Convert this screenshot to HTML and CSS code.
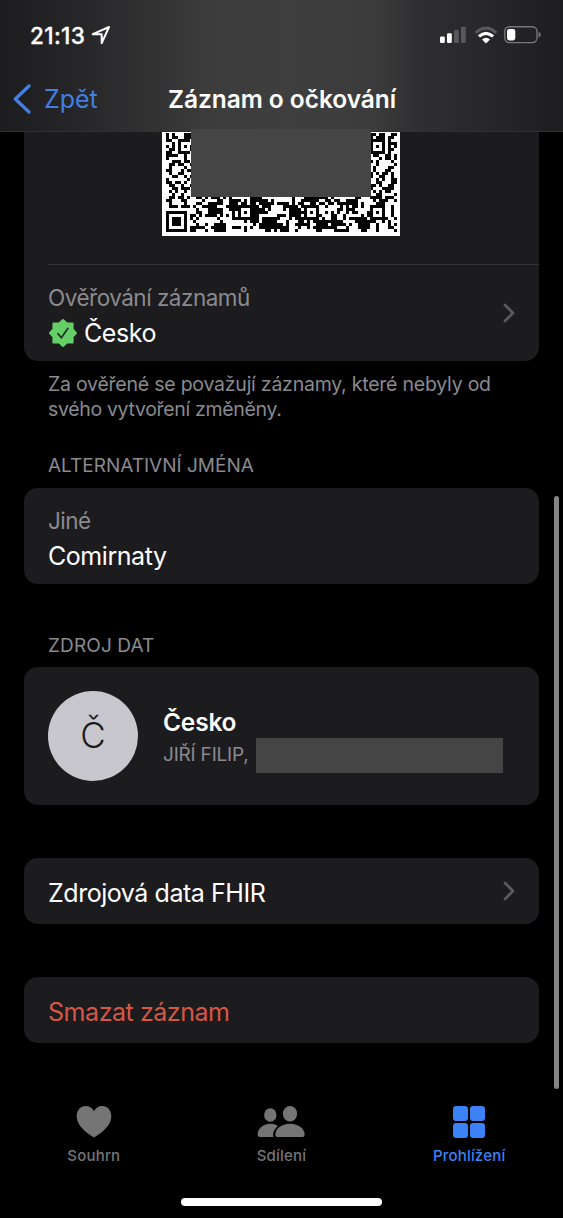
FILE: index.html
```html
<!DOCTYPE html>
<html lang="cs">
<head>
<meta charset="utf-8">
<title>Záznam o očkování</title>
<link rel="stylesheet" href="styles.css">
</head>
<body>
<div class="phone">
  <header class="header">
    <div class="status">
      <div class="clock"><span class="time">21:13</span>
        <svg class="location" width="20" height="20" viewBox="0 0 20 20"><path d="M1.8 9.2 18 2 10.7 18.2V9.3Z" fill="none" stroke="#fff" stroke-width="2" stroke-linejoin="round"/></svg>
      </div>
      <div class="indicators">
        <svg width="26" height="18" viewBox="0 0 26 18"><g fill="#fff"><rect y="10.5" width="4.8" height="6.5" rx="1.3"/><rect x="7" y="7.3" width="4.8" height="9.7" rx="1.3"/></g><g fill="#58585a"><rect x="14" y="4" width="4.8" height="13" rx="1.3"/><rect x="21" y=".7" width="4.8" height="16.3" rx="1.3"/></g></svg>
        <svg class="wifi" width="24" height="18" viewBox="0 0 24 18"><g fill="none" stroke-width="3.1"><path d="M1.6 6.8Q12-2.6 22.4 6.8" stroke="#58585a"/><path d="M4.9 10.4Q12 4.2 19.1 10.4" stroke="#fff"/></g><path d="M8 13.4Q12 10.2 16 13.4L12 17.4Z" fill="#fff"/></svg>
        <svg class="battery" width="38" height="18" viewBox="0 0 38 18"><rect x=".8" y=".8" width="32.2" height="15.8" rx="4.5" fill="none" stroke="#77777a" stroke-width="1.4"/><rect x="3" y="3" width="8.3" height="11.4" rx="2.3" fill="#fff"/><path d="M34.6 5.7q2.2.8 2.2 3t-2.2 3z" fill="#77777a"/></svg>
      </div>
    </div>
    <nav class="navbar">
      <a class="back"><svg width="19" height="30" viewBox="0 0 19 30"><path d="M17 2 3.3 15 17 28" fill="none" stroke="#437fe2" stroke-width="3.3" stroke-linecap="round" stroke-linejoin="round"/></svg><span class="back-label">Zpět</span></a>
      <h1 class="title">Záznam o očkování</h1>
    </nav>
  </header>
  <main class="content">
    <section class="card verify">
      <div class="qr-area"><svg class="qr" id="qr" width="238" height="104" viewBox="0 0 238 104" shape-rendering="crispEdges"></svg><div class="redaction qr-cover"></div></div>
      <div class="row verify-row">
        <div class="pair"><span class="label ver-label">Ověřování záznamů</span>
          <span class="verified"><svg width="30" height="30" viewBox="0 0 30 30"><path d="M15 2.2 18.6 5.6H24.4V11.4L27.8 15 24.4 18.6V24.4H18.6L15 27.8 11.4 24.4H5.6V18.6L2.2 15 5.6 11.4V5.6H11.4Z" fill="#65ce68" stroke="#65ce68" stroke-width="2.4" stroke-linejoin="round"/><path d="m10 15.7 3.4 4.1 6.4-9.4" fill="none" stroke="#1c351e" stroke-width="1.8" stroke-linecap="round" stroke-linejoin="round"/></svg><span class="value country">Česko</span></span>
        </div>
        <svg class="chevron" width="12" height="20" viewBox="0 0 12 20"><path d="m2 2 8 8-8 8"/></svg>
      </div>
    </section>
    <p class="note"><span class="note-a">Za ověřené se považují záznamy, které nebyly od</span><br><span class="note-b">svého vytvoření změněny.</span></p>
    <h2 class="heading alt">ALTERNATIVNÍ JMÉNA</h2>
    <section class="card names"><span class="label other">Jiné</span><span class="value comirnaty">Comirnaty</span></section>
    <h2 class="heading source">ZDROJ DAT</h2>
    <section class="card provider">
      <div class="avatar">Č</div>
      <div class="person"><strong class="name">Česko</strong><div class="subline"><span class="patient">JIŘÍ FILIP,</span><span class="redaction name-cover"></span></div></div>
    </section>
    <section class="card row action fhir"><span class="value fhir-label">Zdrojová data FHIR</span><svg class="chevron" width="12" height="20" viewBox="0 0 12 20"><path d="m2 2 8 8-8 8"/></svg></section>
    <section class="card row action delete"><span class="value delete-label">Smazat záznam</span></section>
  </main>
  <footer class="tabs">
    <a class="tab"><svg width="36" height="34" viewBox="0 0 36 34"><path d="M18 32.5C12 29 .7 21.5.7 11.3.7 5 4.9 1 9.8 1 13.5 1 16.3 3 18 6.2 19.7 3 22.5 1 26.2 1c4.9 0 9.1 4 9.1 10.3C35.3 21.5 24 29 18 32.5Z" fill="#757575"/></svg><span class="tab-a">Souhrn</span></a>
    <a class="tab"><svg width="48" height="34" viewBox="0 0 48 34"><g fill="#757575"><ellipse cx="13.3" cy="10" rx="6.2" ry="6.8"/><ellipse cx="33" cy="8.7" rx="7.1" ry="7.7"/><path d="M3 32Q.6 32 .6 29.7C.6 24 6 18.8 13.2 18.8c3 0 5.6.8 7.7 2.2C17.8 23.6 16 27 16 30q0 1.2.5 2Z"/><path d="M21.4 32Q18.4 32 18.4 29.4C18.4 24 24.3 18.8 33 18.8S47.6 24 47.6 29.4q0 2.6-3 2.6Z"/></g></svg><span class="tab-b">Sdílení</span></a>
    <a class="tab active"><svg width="32" height="34" viewBox="0 0 32 34"><g fill="#3c82f7"><rect y="1" width="15" height="15" rx="3.2"/><rect x="17" y="1" width="15" height="15" rx="3.2"/><rect y="18" width="15" height="15" rx="3.2"/><rect x="17" y="18" width="15" height="15" rx="3.2"/></g></svg><span class="tab-c">Prohlížení</span></a>
  </footer>
  <div class="scrollbar"></div>
  <div class="home"></div>
</div>
<script src="qr.js"></script>
</body>
</html>
```
FILE: styles.css
```css
* { box-sizing: border-box; }
body { margin: 0; background: #000; color: #fff; font-family: Inter, "Liberation Sans", sans-serif; }
h1, h2, p { margin: 0; font-weight: 400; }
svg { display: block; flex: none; }
span, strong, h1, h2 { white-space: nowrap; }
.phone { position: relative; width: 563px; height: 1218px; overflow: hidden; display: flex; flex-direction: column; background: #000; }
.header { height: 132px; flex: none; background: linear-gradient(90deg, #1c1c1e 0, #28282a 90px, #303031 140px, #3c3c3c 210px, #3f3f3f 290px, #3b3b3b 375px, #2e2e30 425px, #27272a 490px, #1d1d20 563px); border-bottom: 1px solid #303031; }
.status { height: 68px; padding: 2px 21px 0 30px; display: flex; justify-content: space-between; align-items: center; }
.clock { display: flex; align-items: center; gap: 6px; }
.time { font-size: 22.5px; font-weight: 500; -webkit-text-stroke: .3px #fff; letter-spacing: .35px; }
.indicators { display: flex; align-items: center; }
.wifi { margin-left: 8px; }
.battery { margin-left: 6px; }
.navbar { height: 62px; display: grid; grid-template-columns: 156px 1fr; align-items: center; padding-left: 12px; }
.back { display: flex; align-items: center; gap: 13px; color: #437fe2; font-size: 25px; }
.title { font-size: 24.5px; font-weight: 600; letter-spacing: -.05px; }
.content { height: 959px; flex: none; padding: 0 24px; }
.card { width: 515px; background: #1c1c1e; border-radius: 14px; }
.verify { height: 229px; border-radius: 0 0 14px 14px; }
.qr-area { position: relative; height: 132px; padding-left: 138px; }
.redaction { background: #454545; }
.qr-cover { position: absolute; left: 167px; top: -3px; width: 180px; height: 68px; }
.row { display: flex; justify-content: space-between; align-items: center; }
.verify-row { height: 97px; margin-left: 24px; padding: 0 24px 0 0; border-top: 1px solid #343437; }
.pair { display: flex; flex-direction: column; padding-top: 6px; }
.label { font-size: 22.5px; line-height: 34px; letter-spacing: -.5px; color: #8a8a8f; }
.verified { display: flex; align-items: center; gap: 6px; }
.value { font-size: 25px; line-height: 36px; letter-spacing: -.45px; }
.chevron path { fill: none; stroke: #5a5a5e; stroke-width: 2.8; stroke-linecap: round; stroke-linejoin: round; }
.note { height: 93px; padding: 11px 0 0 24px; color: #8a8a8f; font-size: 19.5px; line-height: 24.5px; letter-spacing: -.23px; }
.note-b { letter-spacing: -.33px; }
.heading { color: #8a8a8f; font-size: 19px; line-height: 24px; padding-left: 24px; }
.alt { height: 34px; }
.names { height: 96px; padding: 16px 24px 0; display: flex; flex-direction: column; }
.source { height: 83px; padding-top: 50px; letter-spacing: .12px; }
.provider { height: 138px; padding: 0 24px; display: flex; align-items: center; gap: 25px; }
.avatar { width: 90px; height: 90px; border-radius: 50%; background: #c9c7ce; color: #1c1c1e; font-size: 35px; font-weight: 300; padding-bottom: 3px; display: flex; justify-content: center; align-items: center; }
.person { display: flex; flex-direction: column; padding-top: 6px; }
.name { font-size: 24.5px; line-height: 32px; font-weight: 600; letter-spacing: -.2px; }
.subline { display: flex; align-items: center; height: 35px; }
.patient { width: 93px; color: #8a8a8f; font-size: 19px; letter-spacing: -.2px; padding-bottom: 2px; }
.name-cover { width: 247px; height: 35px; }
.action { height: 66px; padding: 0 24px; }
.action .value { padding-top: 3px; }
.fhir { margin-top: 53px; }
.delete { margin-top: 53px; color: #d65745; }
.tabs { display: grid; grid-template-columns: repeat(3, 1fr); padding-top: 14px; height: 127px; align-items: start; }
.tab { display: flex; flex-direction: column; align-items: center; gap: 7px; font-size: 15px; font-weight: 500; line-height: 20px; letter-spacing: .2px; color: #757575; }
.active { color: #3c82f7; }
.scrollbar { position: absolute; left: 554px; top: 496px; width: 5px; height: 593px; border-radius: 3px; background: #858585; }
.home { position: absolute; left: 181px; top: 1198px; width: 201px; height: 8px; border-radius: 4px; background: #fff; }
```
FILE: qr.js
```javascript
// Lower part of a 77-module code, three pixels per module.
const first = 44, size = 77;
const left = [
  "#.#...##", "#.##..##", "##..####", "..#.#...", "#.#.#.#.", ".##.#...", "##..####",
  "####..#.", "#.....#.", "..###.##", ".##.##..", ".#....#.", "##...#.#", ".#..##..",
  "..##..#.", "#......#", "##.##.#.", ".##..#..", "..##.###", ".#.#..#.", "..#..#..",
  ".##.##.#", "##...##.", ".#....#.", ".###.###", "........", "#######.", "#.....#.",
  "#.###.#.", "#.###.#.", "#.###.#.", "#.....#.", "#######."
];
const right = [
  "##.##..##", "#.###.##.", "#####.#..", "#...#.###", "#.#.#.#.#", "#...#.##.", "#####.#..",
  ".##..##.#", "...#.##.#", "#.#....#.", "..#.....#", ".#....##.", ".#...##..", "#.#.##.#.",
  "#..##..#.", "..#.#..##", "..##...##", "##.#..##.", "#...####.", ".#.#.##..", "..##....#"
];
// Solid patches: column, row, width, height, dark.
const patches = [
  [14, 67, 3, 5, 1], [12, 68, 2, 1, 1], [17, 69, 2, 2, 1], [16, 74, 4, 3, 1], [21, 67, 3, 3, 1],
  [29, 68, 2, 5, 1], [33, 72, 4, 4, 1], [42, 69, 3, 2, 1], [44, 72, 2, 3, 1], [50, 73, 4, 3, 1],
  [46, 65, 4, 2, 1], [60, 66, 4, 2, 1], [64, 72, 3, 4, 1], [11, 72, 5, 2, 0], [37, 65, 5, 2, 0],
  [54, 68, 3, 2, 0], [24, 74, 5, 1, 0], [20, 73, 3, 1, 0], [73, 67, 2, 5, 0], [66, 65, 2, 4, 0]
];
let seed = 7319;
function bit() { seed = (seed * 1103515 + 12345) % 2147483648; return Math.floor(seed / 65536) % 100 < 48; }
function dark(r, c) {
  if (c < 8) return left[r - first][c] === "#";
  if (r < 65 && c >= 68) return right[r - first][c - 68] === "#";
  for (const x of [26, 48, 70]) {
    const d = Math.max(Math.abs(r - 70), Math.abs(c - x));
    if (d < 3) return d !== 1;
  }
  for (const [x, y, w, h, on] of patches)
    if (c >= x && c < x + w && r >= y && r < y + h) return on === 1;
  return bit();
}
let path = "";
for (let r = first; r < size; r++)
  for (let c = 0; c < size; c++)
    if (dark(r, c)) path += `M${4 + c * 3} ${1 + (r - first) * 3}h3v3h-3z`;
document.getElementById("qr").innerHTML = `<rect width="238" height="104" fill="#fff"/><path d="${path}" fill="#050505"/>`;
```
